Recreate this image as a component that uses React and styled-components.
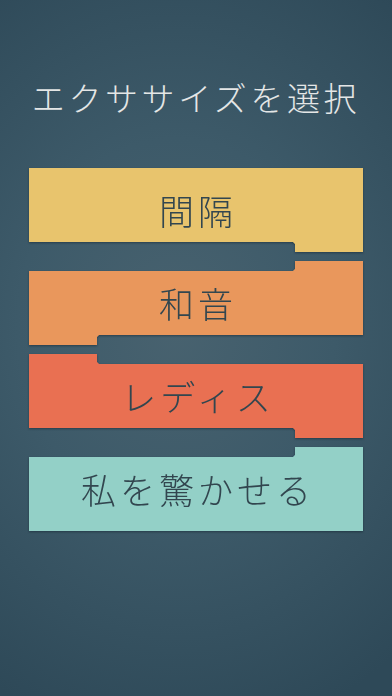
import React from 'react';
import styled, { createGlobalStyle } from 'styled-components';

const GlobalStyle = createGlobalStyle`
  html, body {
    margin: 0;
    padding: 0;
    height: 100%;
  }

  body {
    font-family: "Noto Sans CJK JP", "Noto Sans", sans-serif;
  }
`;

const TAB_W = 68;
const TAB_H = 10;
const R = 4;

const exercises = [
  { label: '間隔', color: '#e8c46d', bottom: 'right' },
  { label: '和音', color: '#e9975c', top: 'right', bottom: 'left' },
  { label: 'レディス', color: '#e97052', top: 'left', bottom: 'right' },
  { label: '私を驚かせる', color: '#93d0c7', top: 'right' },
];

// builds the notched outline of a bar out of background layers
const shape = ({ $color, $top, $bottom }) => {
  const fill = `linear-gradient(${$color}, ${$color})`;
  const layers = [];
  const pos = [];
  const size = [];

  const bodyTop = $top ? TAB_H : 0;
  const bodyBottom = $bottom ? TAB_H : 0;
  layers.push(fill);
  pos.push(`left 0 top ${bodyTop}px`);
  size.push(`100% calc(100% - ${bodyTop + bodyBottom}px)`);

  if ($top) {
    layers.push(fill);
    pos.push(`${$top} 0 top 0`);
    size.push(`${TAB_W}px ${TAB_H}px`);
    const cx = $top === 'right' ? '0' : '100%';
    layers.push(`radial-gradient(circle at ${cx} 0, transparent ${R}px, ${$color} ${R + 0.5}px)`);
    pos.push(`${$top} ${TAB_W}px top ${TAB_H - R}px`);
    size.push(`${R}px ${R}px`);
  }

  if ($bottom) {
    layers.push(fill);
    pos.push(`${$bottom} 0 bottom 0`);
    size.push(`${TAB_W}px ${TAB_H}px`);
    const cx = $bottom === 'right' ? '0' : '100%';
    layers.push(`radial-gradient(circle at ${cx} 100%, transparent ${R}px, ${$color} ${R + 0.5}px)`);
    pos.push(`${$bottom} ${TAB_W}px bottom ${TAB_H - R}px`);
    size.push(`${R}px ${R}px`);
  }

  return `
    background-color: transparent;
    background-image: ${layers.join(', ')};
    background-position: ${pos.join(', ')};
    background-size: ${size.join(', ')};
    background-repeat: no-repeat;
  `;
};

const Screen = styled.div`
  width: 392px;
  height: 696px;
  box-sizing: border-box;
  padding: 75px 29px 0;
  background: radial-gradient(ellipse 90% 60% at 45% 47%, #48626f 0%, #3d5a69 45%, #2e4958 100%);
  overflow: hidden;
`;

const Title = styled.h1`
  margin: 0 0 49px;
  font-size: 33px;
  font-weight: 300;
  line-height: 44px;
  letter-spacing: 3.6px;
  color: #e4e6e6;
  text-align: center;
  white-space: nowrap;
`;

const Menu = styled.div`
  display: flex;
  flex-direction: column;
  gap: 9.5px;
`;

const Bar = styled.button`
  display: flex;
  align-items: center;
  justify-content: center;
  width: 334px;
  height: 83.5px;
  padding: 0 0 0 4px;
  border: 0;
  font-family: inherit;
  font-size: 35px;
  font-weight: 300;
  letter-spacing: 4px;
  color: #32464f;
  cursor: pointer;
  filter: drop-shadow(0 1.5px 1px rgba(10, 25, 35, 0.45));
  ${shape}
`;

export default function App() {
  return (
    <>
      <GlobalStyle />
      <Screen>
        <Title>エクササイズを選択</Title>
        <Menu>
          {exercises.map(item => (
            <Bar key={item.label} $color={item.color} $top={item.top} $bottom={item.bottom}>
              {item.label}
            </Bar>
          ))}
        </Menu>
      </Screen>
    </>
  );
}
